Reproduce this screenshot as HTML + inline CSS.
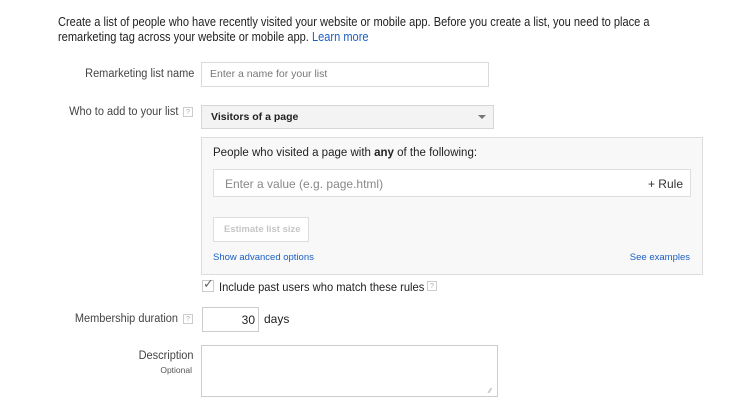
<!DOCTYPE html>
<html><head><meta charset="utf-8"><style>
body{margin:0;width:750px;height:413px;background:#fff;font-family:"Liberation Sans",Arial,sans-serif;color:#222;position:relative;overflow:hidden}
.a{position:absolute;white-space:nowrap}
.lbl{font-size:11.5px;color:#444;text-align:right;transform:scaleX(0.955);transform-origin:right}
.box{position:absolute;box-sizing:border-box;border:1px solid #d9d9d9;background:#fff}
.q{position:absolute;width:10px;height:10px;border:1px solid #ccc;font-size:7px;color:#aaa;text-align:center;line-height:9px;box-sizing:border-box}
a{color:#1a5fc4;text-decoration:none}
</style></head><body>
<div class="a" style="left:58px;top:15px;font-size:12.5px;line-height:15px;color:#222;transform:scaleX(0.885);transform-origin:left">Create a list of people who have recently visited your website or mobile app. Before you create a list, you need to place a<br>remarketing tag across your website or mobile app. <a>Learn more</a></div>

<div class="a lbl" style="right:556px;top:68px">Remarketing list name</div>
<div class="box" style="left:201px;top:62px;width:288px;height:25px"></div>
<div class="a" style="left:210px;top:68px;font-size:10.5px;color:#777">Enter a name for your list</div>

<div class="a lbl" style="right:572px;top:106px">Who to add to your list</div>
<div class="q" style="left:183px;top:107px">?</div>
<div class="box" style="left:201px;top:105px;width:293px;height:24px;background:#f3f3f3;border-color:#d6d6d6"></div>
<div class="a" style="left:211px;top:111px;font-size:10.5px;font-weight:bold;color:#222">Visitors of a page</div>
<div class="a" style="left:478px;top:115px;width:0;height:0;border-left:4px solid transparent;border-right:4px solid transparent;border-top:4px solid #777"></div>

<div class="box" style="left:201px;top:137px;width:502px;height:138px;background:#f8f8f8;border-color:#ddd"></div>
<div class="a" style="left:213px;top:147px;font-size:11.5px;color:#222">People who visited a page with <b>any</b> of the following:</div>
<div class="box" style="left:213px;top:169px;width:478px;height:28px;border-color:#ddd"></div>
<div class="a" style="left:225px;top:177px;font-size:12px;color:#888">Enter a value (e.g. page.html)</div>
<div class="a" style="right:67px;top:177px;font-size:12px;color:#333">+ Rule</div>
<div class="box" style="left:213px;top:217px;width:96px;height:25px;border-color:#ddd"></div>
<div class="a" style="left:224px;top:224px;font-size:9.5px;font-weight:bold;color:#c6c6c6">Estimate list size</div>
<div class="a" style="left:213px;top:252px;font-size:9.5px"><a>Show advanced options</a></div>
<div class="a" style="right:60px;top:252px;font-size:9.5px"><a>See examples</a></div>

<div class="box" style="left:202px;top:280px;width:12px;height:12px;border-color:#ccc"></div>
<div class="a" style="left:203px;top:276px;font-size:13px;color:#666">✓</div>
<div class="a" style="left:219px;top:280px;font-size:12px;color:#222;transform:scaleX(0.93);transform-origin:left">Include past users who match these rules</div>
<div class="q" style="left:427px;top:281px">?</div>

<div class="a lbl" style="right:572px;top:313px">Membership duration</div>
<div class="q" style="left:183px;top:314px">?</div>
<div class="box" style="left:202px;top:307px;width:57px;height:25px;border-color:#ccc"></div>
<div class="a" style="right:495px;top:313px;font-size:12px;color:#222">30</div>
<div class="a" style="left:264px;top:312px;font-size:12px;color:#222">days</div>

<div class="a lbl" style="right:556px;top:350px">Description</div>
<div class="a" style="right:558px;top:365px;font-size:8.5px;color:#555">Optional</div>
<div class="box" style="left:201px;top:345px;width:297px;height:52px;border-color:#ccc"></div>
<div class="a" style="left:489px;top:388px;font-size:7px;color:#999">⁄⁄</div>
</body></html>
